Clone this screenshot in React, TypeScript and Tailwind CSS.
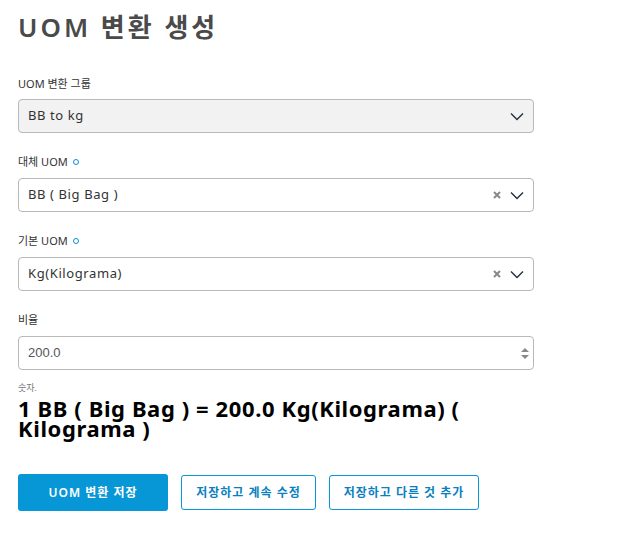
const Chevron = () => (
  <svg width="14" height="9" viewBox="0 0 14 9" fill="none" className="shrink-0">
    <path d="M1 1.5 L7 7.5 L13 1.5" stroke="#232f3e" strokeWidth="1.4" />
  </svg>
);

const Clear = () => (
  <svg width="8" height="8" viewBox="0 0 8 8" className="shrink-0">
    <path d="M1 1 L7 7 M7 1 L1 7" stroke="#888" strokeWidth="2" />
  </svg>
);

const Dot = () => <span className="ml-[5px] inline-block h-[6px] w-[6px] rounded-full border-[1.5px] border-[#0a8fd1]" />;

const Select = ({ value, clear, gray }: { value: string; clear?: boolean; gray?: boolean }) => (
  <div
    className={`flex h-[34px] w-[516px] items-center rounded-[4px] border border-[#b9b9b9] pl-[9px] pr-[9px] text-[13px] tracking-[0.6px] text-[#333] ${
      gray ? "bg-[#f2f2f2]" : "bg-white"
    }`}
  >
    <span className="flex-1">{value}</span>
    {clear && (
      <span className="mr-[9px] flex">
        <Clear />
      </span>
    )}
    <Chevron />
  </div>
);

const App = () => {
  return (
    <div
      className="min-h-screen bg-white px-[18px] pt-[10px]"
      style={{ fontFamily: '"Noto Sans", "Noto Sans CJK KR", sans-serif' }}
    >
      <h1 className="text-[26px] font-semibold leading-[34px] tracking-[3px] text-[#4a4a4a]">UOM 변환 생성</h1>

      <div className="mt-[32px] flex flex-col">
        <label className="text-[11px] leading-[16px] text-[#333]">UOM 변환 그룹</label>
        <div className="mt-[7px]">
          <Select value="BB to kg" gray />
        </div>

        <label className="mt-[21px] flex items-center text-[11px] leading-[16px] text-[#333]">
          대체 UOM <Dot />
        </label>
        <div className="mt-[8px]">
          <Select value="BB ( Big Bag )" clear />
        </div>

        <label className="mt-[21px] flex items-center text-[11px] leading-[16px] text-[#333]">
          기본 UOM <Dot />
        </label>
        <div className="mt-[8px]">
          <Select value="Kg(Kilograma)" clear />
        </div>

        <label className="mt-[21px] text-[11px] leading-[16px] text-[#333]">비율</label>
        <div className="mt-[8px] flex h-[34px] w-[516px] items-center rounded-[4px] border border-[#b9b9b9] pl-[9px] pr-[4px] text-[13px] text-[#555]">
          <span className="flex-1" style={{ fontFamily: '"Liberation Sans", sans-serif' }}>
            200.0
          </span>
          <svg width="8" height="13" viewBox="0 0 8 13">
            <path d="M0 5 L4 1 L8 5 Z M0 8 L4 12 L8 8 Z" fill="#888" />
          </svg>
        </div>

        <div className="mt-[12px] text-[9px] leading-[12px] text-[#777]">숫자.</div>
        <div className="mt-[4px] w-[470px] text-[22px] font-bold leading-[20px] tracking-[0.6px] text-black">
          1 BB ( Big Bag ) = 200.0 Kg(Kilograma) ( Kilograma )
        </div>

        <div className="mt-[36px] flex items-center gap-[13px]">
          <button className="h-[37px] w-[150px] rounded-[3px] bg-[#0796d6] text-[12px] font-semibold tracking-[1px] text-white">
            UOM 변환 저장
          </button>
          <button className="h-[35px] w-[135px] rounded-[3px] border border-[#0796d6] bg-white text-[12px] font-semibold tracking-[1px] text-[#0a7fc0]">
            저장하고 계속 수정
          </button>
          <button className="h-[35px] w-[150px] rounded-[3px] border border-[#0796d6] bg-white text-[12px] font-semibold tracking-[1px] text-[#0a7fc0]">
            저장하고 다른 것 추가
          </button>
        </div>
      </div>
    </div>
  );
};

export default App;
